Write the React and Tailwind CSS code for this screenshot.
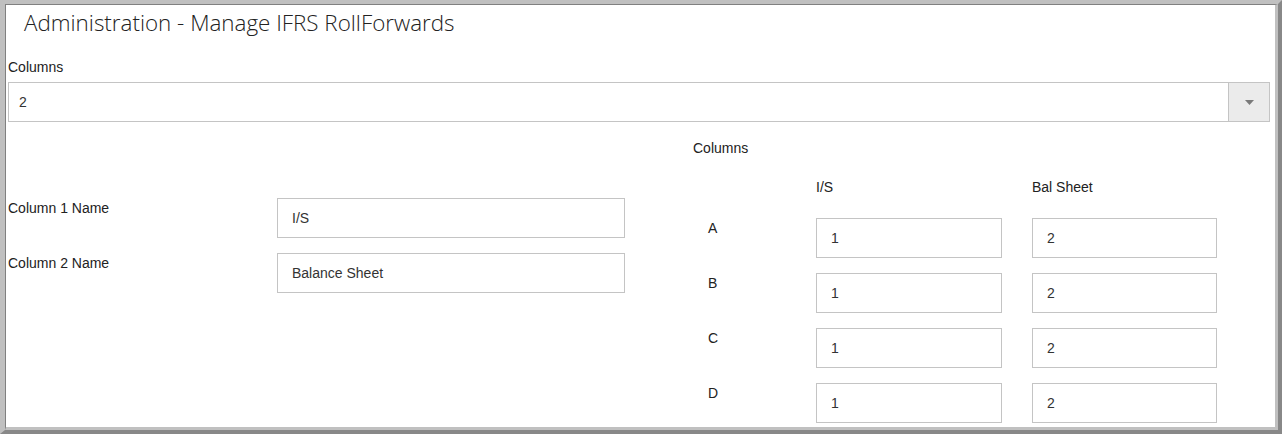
const rows = [
  { key: 'A', is: '1', bal: '2' },
  { key: 'B', is: '1', bal: '2' },
  { key: 'C', is: '1', bal: '2' },
  { key: 'D', is: '1', bal: '2' },
];

const names = [
  { label: 'Column 1 Name', value: 'I/S' },
  { label: 'Column 2 Name', value: 'Balance Sheet' },
];

function Box({ value, className }) {
  return (
    <div className={`h-10 border border-[#c4c4c4] bg-white flex items-center pl-[14px] text-[14px] text-[#333] ${className}`}>
      {value}
    </div>
  );
}

export default function App() {
  return (
    <div className="w-[1282px] h-[434px] overflow-hidden bg-[#c0c0c0] border-t-4 border-l-5 border-r-4 border-b-4 border-t-[#c0c0c0] border-l-[#c0c0c0] border-r-[#888] border-b-[#888] font-['Liberation_Sans',Arial,sans-serif]">
      <div className="h-full overflow-hidden bg-white border-t border-l border-r-3 border-b-3 border-t-[#808080] border-l-[#808080] border-r-[#c0c0c0] border-b-[#c0c0c0]">
        <h1 className="ml-[18px] mt-[3px] text-[22.4px] leading-[30px] font-light text-[#222] font-['Open_Sans',sans-serif]">
          Administration - Manage IFRS RollForwards
        </h1>

        <div className="ml-[2px] mt-[19px] text-[14px] leading-5 text-[#222]">Columns</div>

        <div className="ml-[2px] mr-[5px] mt-[5px] h-10 flex border border-[#c4c4c4]">
          <div className="flex-1 flex items-center pl-[10px] text-[14px] text-[#333]">2</div>
          <div className="w-[41px] bg-[#ebebeb] border-l border-[#c4c4c4] flex items-center justify-center">
            <svg width="9" height="5" viewBox="0 0 9 5">
              <path d="M0 0H9L4.5 5Z" fill="#7a7a7a" />
            </svg>
          </div>
        </div>

        <div className="flex">
          <div className="w-[687px] pl-[2px] pt-[76px] flex flex-col gap-[15px]">
            {names.map((n) => (
              <div key={n.label} className="flex">
                <div className="w-[269px] text-[14px] leading-5 text-[#222]">{n.label}</div>
                <Box value={n.value} className="w-[348px]" />
              </div>
            ))}
          </div>

          <div className="flex-1 pt-[16px]">
            <div className="text-[14px] leading-5 text-[#222]">Columns</div>
            <div className="flex mt-[19px] text-[14px] leading-5 text-[#222]">
              <div className="w-[123px]" />
              <div className="w-[216px]">I/S</div>
              <div>Bal Sheet</div>
            </div>
            <div className="mt-[21px] flex flex-col gap-[15px]">
              {rows.map((r) => (
                <div key={r.key} className="flex">
                  <div className="w-[123px] pl-[15px] text-[14px] leading-5 text-[#222]">{r.key}</div>
                  <Box value={r.is} className="w-[186px]" />
                  <div className="w-[30px]" />
                  <Box value={r.bal} className="w-[185px]" />
                </div>
              ))}
            </div>
          </div>
        </div>
      </div>
    </div>
  );
}
